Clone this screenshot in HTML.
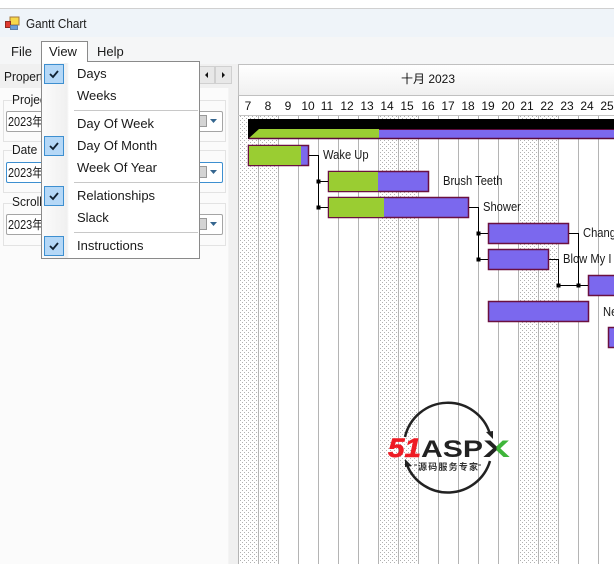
<!DOCTYPE html>
<html><head><meta charset="utf-8"><style>
html,body{margin:0;padding:0;background:#fff}
#r{position:relative;width:614px;height:564px;overflow:hidden;background:#fbfbfb;font-family:"Liberation Sans","Noto Sans CJK SC",sans-serif;color:#1a1a1a;font-size:13px}
#r div{position:absolute;box-sizing:border-box}
.t{white-space:nowrap;line-height:16px}
.n{white-space:nowrap;line-height:16px;font-size:13px;transform-origin:left center;transform:scaleX(.86)}
.y{white-space:nowrap;line-height:16px;font-size:12.500px;transform-origin:left center;transform:scaleX(.87);left:8px}
.g{border:1px solid #e3e3e3;background:#fbfbfb;left:3px;width:223px}
.c{border:1px solid #a5a5a5;background:#fff;left:6px;width:217px;height:21px;border-radius:2px}
.chk{left:44px;width:20px;height:20px;background:#b5d8f7;border:1px solid #3d8fd0}
.sep{left:74px;width:124px;height:1px;background:#c8c8c8}
</style></head><body><div id="r">
<div style="left:0;top:0;width:614px;height:8px;background:#fff"></div>
<div style="left:0;top:8px;width:614px;height:1px;background:#d0d0d0"></div>
<div style="left:0;top:9px;width:614px;height:28px;background:#eff4f9"></div>
<div style="left:0;top:37px;width:614px;height:27px;background:#f5f6f7"></div>
<svg style="position:absolute;left:4px;top:15px" width="16" height="16"><rect x="6" y="2" width="9" height="8" fill="#f6d84a" stroke="#a5793a"/><rect x="1.500" y="6.500" width="5" height="6" fill="#e03a30" stroke="#8f2a20"/><rect x="6.500" y="10.500" width="7" height="4" fill="#6b9ed8" stroke="#5a7fa8"/></svg>
<div class="n" style="left:26px;top:16px;transform:scaleX(.9)">Gantt Chart</div>
<div class="t" style="left:11px;top:44px">File</div>
<div class="t" style="left:97px;top:44px">Help</div>

<!-- splitter -->
<div style="left:229px;top:64px;width:10px;height:500px;background:#f0f0f0"></div>
<div style="left:228px;top:84px;width:1px;height:480px;background:#f4f4f4"></div>

<!-- left panel -->
<div style="left:0;top:64px;width:233px;height:24px;background:#f0f0f0"></div>
<div class="n" style="left:4px;top:69px;transform:scaleX(.92)">Propert</div>
<div style="left:199px;top:66px;width:16px;height:18px;background:#e8e8e8;border:1px solid #d0d0d0"></div>
<div style="left:215px;top:66px;width:17px;height:18px;background:#e8e8e8;border:1px solid #d0d0d0"></div>
<svg style="position:absolute;left:199px;top:66px" width="34" height="18"><path d="M9 6v6l-3-3zM23 6v6l3-3z" fill="#111"/></svg>

<div class="g" style="top:100px;height:42px"></div>
<div class="g" style="top:150px;height:43px"></div>
<div class="g" style="top:203px;height:43px"></div>
<div class="n" style="left:12px;top:92px;background:#fbfbfb;transform:scaleX(.92)">Projec</div>
<div class="n" style="left:12px;top:142px;background:#fbfbfb;transform:scaleX(.92)">Date I</div>
<div class="n" style="left:12px;top:194px;background:#fbfbfb;transform:scaleX(.92)">Scroll</div>
<div class="c" style="top:111px"></div>
<div class="c" style="top:162px;border-color:#3d8fd0"></div>
<div class="c" style="top:214px"></div>
<div class="y" style="top:114px">2023年</div>
<div class="y" style="top:165px">2023年</div>
<div class="y" style="top:217px">2023年</div>
<svg style="position:absolute;left:198px;top:111px" width="24" height="125">
<rect x="1.500" y="4.500" width="7" height="11" fill="#d4d4d4" stroke="#999"/><path d="M12 8h7l-3.500 4z" fill="#35668f"/>
<rect x="1.500" y="55.500" width="7" height="11" fill="#d4d4d4" stroke="#999"/><path d="M12 59h7l-3.500 4z" fill="#35668f"/>
<rect x="1.500" y="107.500" width="7" height="11" fill="#d4d4d4" stroke="#999"/><path d="M12 111h7l-3.500 4z" fill="#35668f"/></svg>

<!-- chart -->
<div style="left:238px;top:64px;width:376px;height:32px;background:linear-gradient(#fff,#f0f0f0);border-top:1px solid #c0c0c0;border-left:1px solid #c0c0c0;border-bottom:1px solid #c0c0c0"></div>
<div style="left:238px;top:96px;width:376px;height:20px;background:#fff;border-left:1px solid #c0c0c0"></div>
<div style="left:238px;top:116px;width:376px;height:448px;background:#fff"></div>
<svg style="position:absolute;left:0;top:0" width="614" height="564">
<defs><pattern id="d" width="4" height="4" patternUnits="userSpaceOnUse"><rect width="4" height="4" fill="#fff"/><rect x="0" y="0" width="1" height="1" fill="#b0b0b0"/><rect x="2" y="2" width="1" height="1" fill="#b0b0b0"/></pattern>
<linearGradient id="xg" x1="0" x2="1" y1="0" y2="0"><stop offset="0.5" stop-color="#222"/><stop offset="0.5" stop-color="#3fb53a"/></linearGradient></defs>
<rect x="239" y="116" width="39" height="448" fill="url(#d)"/>
<rect x="378" y="116" width="40" height="448" fill="url(#d)"/>
<rect x="518" y="116" width="40" height="448" fill="url(#d)"/>
<path d="M238.500 96V564M258.500 116V564M278.500 116V564M298.500 116V564M318.500 116V564M338.500 116V564M358.500 116V564M378.500 116V564M398.500 116V564M418.500 116V564M438.500 116V564M458.500 116V564M478.500 116V564M498.500 116V564M518.500 116V564M538.500 116V564M558.500 116V564M578.500 116V564M598.500 116V564" stroke="#b4b4b4" fill="none"/>
<path d="M238 115.500H614" stroke="#c4c4c4"/>
<!-- summary -->
<rect x="248" y="119" width="366" height="10" fill="#000"/>
<rect x="248.500" y="129.500" width="366" height="9" fill="#7b68ee" stroke="#5a0a3a"/>
<rect x="249" y="129" width="130" height="9" fill="#9acd32"/>
<path d="M248 119h11v10l-11 10z" fill="#000"/>
<path d="M248.500 138.500H614" stroke="#5a0a3a" stroke-width="1.400"/>
<!-- bars -->
<g stroke="#6a1040" stroke-width="1.500">
<rect x="248.500" y="145.500" width="60" height="20" fill="#7b68ee"/><rect x="249" y="146" width="52" height="19" fill="#9acd32" stroke="none"/>
<rect x="328.500" y="171.500" width="100" height="20" fill="#7b68ee"/><rect x="329" y="172" width="49" height="19" fill="#9acd32" stroke="none"/>
<rect x="328.500" y="197.500" width="140" height="20" fill="#7b68ee"/><rect x="329" y="198" width="55" height="19" fill="#9acd32" stroke="none"/>
<rect x="488.500" y="223.500" width="80" height="20" fill="#7b68ee"/>
<rect x="488.500" y="249.500" width="60" height="20" fill="#7b68ee"/>
<rect x="588.500" y="275.500" width="40" height="20" fill="#7b68ee"/>
<rect x="488.500" y="301.500" width="100" height="20" fill="#7b68ee"/>
<rect x="608.500" y="327.500" width="40" height="20" fill="#7b68ee"/>
</g>
<!-- connectors -->
<path d="M309 155.500H318.500V207.500M318 181.500H328M318 207.500H328M469 207.500H478.500V259.500M478 233.500H488M478 259.500H488M569 233.500H578.500V285.500M549 259.500H558.500V285.500H588" stroke="#000" fill="none"/>
<path d="M316.500 179.500h4v4h-4zM316.500 205.500h4v4h-4zM476.500 231.500h4v4h-4zM476.500 257.500h4v4h-4zM556.500 283.500h4v4h-4zM576.500 283.500h4v4h-4z" fill="#000"/>
<!-- logo -->
<g fill="none" stroke="#222" stroke-width="2.500">
<path d="M405 437A44 44 0 0 1 490 434"/>
<path d="M490 461A44 44 0 0 1 407 465"/>
</g>
<path d="M486 432l7-1 0 8zM412 466l-7 1 0-8z" fill="#222"/>
<path d="M414 465h3M478 465h3" stroke="#333"/>
<text x="388" y="457" font-family="Liberation Sans" font-weight="bold" font-style="italic" font-size="27" fill="#ee1c25" stroke="#ee1c25" stroke-width=".6" textLength="33" lengthAdjust="spacingAndGlyphs">51</text>
<text x="421" y="457" font-family="Liberation Sans" font-weight="bold" font-size="24" fill="#222" textLength="62" lengthAdjust="spacingAndGlyphs">ASP</text>
<text x="483" y="457" font-family="Liberation Sans" font-weight="bold" font-size="24" fill="url(#xg)" textLength="27" lengthAdjust="spacingAndGlyphs">X</text>
<text x="418" y="470" font-family="Noto Sans CJK SC" font-weight="bold" font-size="9" fill="#333" textLength="60">源码服务专家</text>
</svg>
<div class="t" style="left:401px;top:71px;font-size:12px;color:#111">十月 2023</div>
<svg style="position:absolute;left:0;top:0" width="614" height="564" font-family="Liberation Sans" font-size="12" fill="#111" text-anchor="middle">
<text x="248" y="110">7</text><text x="268" y="110">8</text><text x="288" y="110">9</text><text x="308" y="110">10</text><text x="327" y="110">11</text><text x="347" y="110">12</text><text x="367" y="110">13</text><text x="387" y="110">14</text><text x="407" y="110">15</text><text x="428" y="110">16</text><text x="448" y="110">17</text><text x="468" y="110">18</text><text x="488" y="110">19</text><text x="508" y="110">20</text><text x="527" y="110">21</text><text x="547" y="110">22</text><text x="567" y="110">23</text><text x="587" y="110">24</text><text x="607" y="110">25</text>
</svg>
<div class="n" style="left:323px;top:147px">Wake Up</div>
<div class="n" style="left:443px;top:173px">Brush Teeth</div>
<div class="n" style="left:483px;top:199px">Shower</div>
<div class="n" style="left:583px;top:225px">Chang</div>
<div class="n" style="left:563px;top:251px">Blow My I</div>
<div class="n" style="left:603px;top:304px">Ne</div>

<!-- menu -->
<div style="left:41px;top:41px;width:47px;height:22px;background:#fff;border:1px solid #8a8a8a;border-bottom:0"></div>
<div class="t" style="left:49px;top:44px">View</div>
<div style="left:41px;top:61px;width:159px;height:198px;background:linear-gradient(90deg,#fbfbfb 0,#f0f0f0 25px,#fff 27px);border:1px solid #8a8a8a"></div>
<div style="left:42px;top:61px;width:45px;height:2px;background:#fff"></div>
<div class="chk" style="top:64px"></div>
<div class="chk" style="top:136px"></div>
<div class="chk" style="top:186px"></div>
<div class="chk" style="top:236px"></div>
<svg style="position:absolute;left:44px;top:64px" width="20" height="192"><g fill="none" stroke="#123" stroke-width="1.800"><path d="M6 10l3 3 5-6"/><path d="M6 82l3 3 5-6"/><path d="M6 132l3 3 5-6"/><path d="M6 182l3 3 5-6"/></g></svg>
<div class="sep" style="top:110px"></div>
<div class="sep" style="top:182px"></div>
<div class="sep" style="top:232px"></div>
<div class="t" style="left:77px;top:66px">Days</div>
<div class="t" style="left:77px;top:88px">Weeks</div>
<div class="t" style="left:77px;top:116px">Day Of Week</div>
<div class="t" style="left:77px;top:138px">Day Of Month</div>
<div class="t" style="left:77px;top:160px">Week Of Year</div>
<div class="t" style="left:77px;top:188px">Relationships</div>
<div class="t" style="left:77px;top:210px">Slack</div>
<div class="t" style="left:77px;top:238px">Instructions</div>
</div></body></html>
